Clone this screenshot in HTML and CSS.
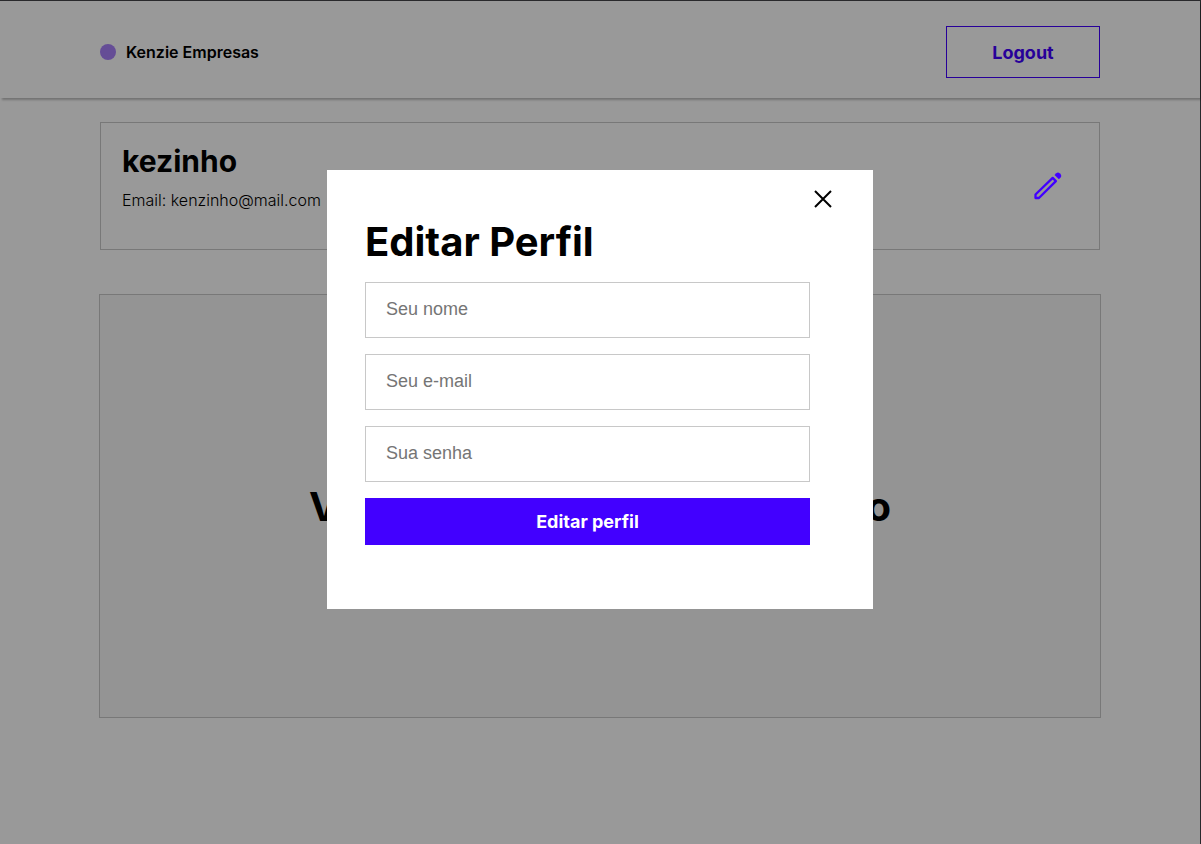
FILE: index.html
```html
<!DOCTYPE html>
<html lang="pt-BR">
<head>
  <meta charset="UTF-8">
  <meta name="viewport" content="width=device-width, initial-scale=1">
  <title>Kenzie Empresas</title>
  <link rel="stylesheet" href="styles.css">
</head>
<body>
  <div class="page">
    <header class="header">
      <div class="container header-content">
        <div class="brand"><span class="brand-dot"></span>Kenzie Empresas</div>
        <button class="logout" type="button">Logout</button>
      </div>
    </header>
    <main class="container main">
      <section class="profile">
        <div>
          <h1 class="profile-name">kezinho</h1>
          <p class="profile-email">Email: kenzinho@mail.com</p>
        </div>
        <button class="edit" type="button" aria-label="Editar perfil">
          <svg width="28" height="28" viewBox="0 0 28 28" aria-hidden="true">
            <path d="M1.5 26V22.5L18.7 5.9L21.9 9.1L4.9 26Z" fill="none" stroke="#4200ff" stroke-width="2.3" stroke-linejoin="round"/>
            <path d="M20.5 2.9L22.3 1.2Q24 -0.1 25.6 1.2L26.6 2.3Q27.9 4 26.6 5.6L24.9 7.2Z" fill="#4200ff"/>
          </svg>
        </button>
      </section>
      <section class="company">
        <h2 class="company-message">Você ainda não foi contratado</h2>
      </section>
    </main>
    <div class="overlay">
      <div class="modal" role="dialog" aria-modal="true" aria-labelledby="modal-title">
        <button class="close" type="button" aria-label="Fechar">
          <svg width="18" height="18" viewBox="0 0 18 18" aria-hidden="true">
            <path d="M1 1L17 17M17 1L1 17" fill="none" stroke="#000" stroke-width="2"/>
          </svg>
        </button>
        <h2 class="modal-title" id="modal-title">Editar Perfil</h2>
        <form class="form">
          <input class="field" type="text" placeholder="Seu nome" aria-label="Seu nome">
          <input class="field" type="email" placeholder="Seu e-mail" aria-label="Seu e-mail">
          <input class="field" type="password" placeholder="Sua senha" aria-label="Sua senha">
          <button class="submit" type="submit">Editar perfil</button>
        </form>
      </div>
    </div>
  </div>
</body>
</html>
```

FILE: styles.css
```css
* {
  box-sizing: border-box;
  margin: 0;
  padding: 0;
}

body {
  font-family: Inter, "Liberation Sans", sans-serif;
  color: #000;
  background: #fff;
}

button {
  font-family: inherit;
  cursor: pointer;
}

.page {
  position: relative;
  min-height: 100vh;
  border-top: 1px solid #29292c;
  border-right: 1px solid #29292c;
}

.container {
  width: 100%;
  max-width: 1050px;
  margin: 0 auto;
  padding: 0 24px;
}

.header {
  padding: 25px 0 20px;
  box-shadow: 2px 2px 2px rgba(0, 0, 0, 0.25);
}

.header-content {
  display: flex;
  align-items: center;
  justify-content: space-between;
  padding: 0 25px;
}

.brand {
  display: flex;
  align-items: center;
  gap: 10px;
  font-size: 16px;
  font-weight: 600;
}

.brand-dot {
  width: 16px;
  height: 16px;
  border-radius: 50%;
  background: #a881fb;
}

.logout {
  width: 154px;
  height: 52px;
  border: 1px solid #4200ff;
  background: none;
  color: #4200ff;
  font-size: 18px;
  font-weight: 700;
}

.main {
  display: flex;
  flex-direction: column;
  gap: 44px;
  padding-top: 24px;
}

.profile {
  display: flex;
  justify-content: space-between;
  min-height: 128px;
  margin: 0 1px;
  padding: 20px 37px 20px 21px;
  border: 1px solid #c8c8c8;
}

.profile-name {
  font-size: 30px;
  line-height: 36px;
  font-weight: 700;
}

.profile-email {
  margin-top: 11px;
  font-size: 16px;
  line-height: 20px;
  font-weight: 300;
}

.edit {
  position: relative;
  z-index: 2;
  align-self: center;
  border: 0;
  background: none;
}

.edit svg,
.close svg {
  display: block;
}

.company {
  display: grid;
  place-items: center;
  min-height: 424px;
  border: 1px solid #c8c8c8;
  background: #f7f7f7;
}

.company-message {
  font-size: 40px;
  font-weight: 700;
  text-align: center;
}

.overlay {
  position: absolute;
  inset: 0;
  z-index: 1;
  display: flex;
  align-items: flex-start;
  justify-content: center;
  padding-top: 169px;
  background: rgba(0, 0, 0, 0.4);
}

.modal {
  display: flex;
  flex-direction: column;
  width: 100%;
  max-width: 546px;
  padding: 20px 63px 64px 38px;
  background: #fff;
}

.close {
  align-self: flex-end;
  margin-right: -22px;
  border: 0;
  background: none;
}

.modal-title {
  margin: 10px 0 16px;
  font-size: 40px;
  line-height: 48px;
  font-weight: 700;
}

.form {
  display: flex;
  flex-direction: column;
  gap: 16px;
}

.field {
  width: 100%;
  height: 56px;
  padding: 0 20px 2px;
  border: 1px solid #c8c8c8;
  background: #fff;
  font-family: "Liberation Sans", Arial, sans-serif;
  font-size: 18px;
}

.field::placeholder {
  color: #757575;
}

.submit {
  height: 47px;
  border: 0;
  background: #4200ff;
  color: #fff;
  font-size: 18px;
  font-weight: 700;
}
```
